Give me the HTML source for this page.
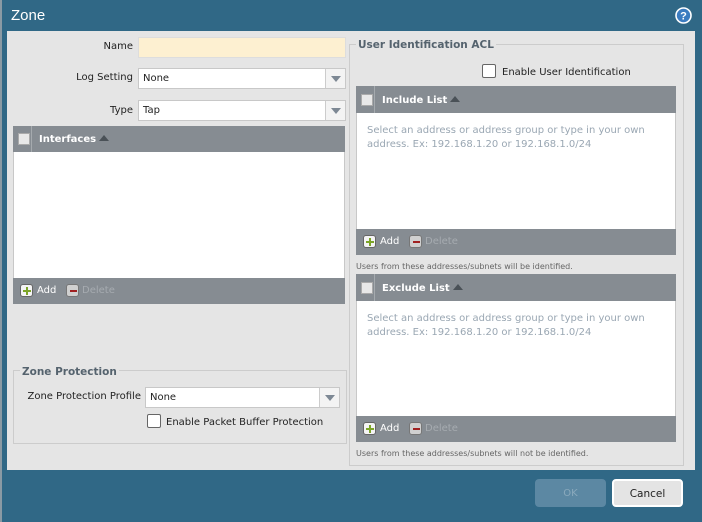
<!DOCTYPE html>
<html><head><style>
*{margin:0;padding:0;box-sizing:border-box}
body{width:702px;height:522px;background:#306886;font-family:"DejaVu Sans","Liberation Sans",sans-serif;font-size:10px;color:#222;position:relative;overflow:hidden}
.a{position:absolute;white-space:nowrap}
.title{left:11px;top:7px;color:#fff;font-size:15px;font-family:"Liberation Sans",sans-serif}
.panel{left:7px;top:31px;width:688px;height:439px;background:#e5e5e5}
.lbl{text-align:right;font-size:10px;color:#222}
.inp{background:#fff;border:1px solid #c8c8c8;height:21px;padding:4px 4px;font-size:10px}
.arr{position:absolute;right:0;top:0;width:20px;height:19px;border-left:1px solid #ccc;background:#f3f3f3}
.arr:after{content:"";position:absolute;left:5px;top:7px;border-left:5px solid transparent;border-right:5px solid transparent;border-top:6px solid #7d8894}
.hdr{background:#868c92;color:#fff;font-weight:bold;font-size:10px}
.cb{position:absolute;width:12px;height:12px;background:#e8e8e8;border:1px solid #aaa}
.sep{position:absolute;left:18px;top:0;width:1px;height:100%;background:#a5aaae}
.tri{display:inline-block;border-left:5px solid transparent;border-right:5px solid transparent;border-bottom:6px solid #4a5157;margin-left:3px;vertical-align:1px}
.ftr{background:#868c92;color:#fff;font-size:10px}
.plus,.minus{position:absolute;width:13px;height:13px;border-radius:3px;background:#f4f4f4;border:1px solid #666}
.plus:before{content:"";position:absolute;left:2px;top:4.5px;width:8px;height:2.5px;background:#7da528}
.plus:after{content:"";position:absolute;left:4.7px;top:2px;width:2.5px;height:8px;background:#7da528}
.minus{background:#d0d0d0;border-color:#777}
.minus:before{content:"";position:absolute;left:2.5px;top:4.5px;width:7px;height:2.5px;background:#a02020}
.ph{color:#9aa7b3;font-size:10px;line-height:14px;white-space:nowrap}
.note{color:#666;font-size:8px}
.chk{position:absolute;width:14px;height:14px;background:#fff;border:1px solid #666;border-radius:2px}
.fs{border:1px solid #ccc}
.leg{background:#e5e5e5;color:#55636e;font-weight:bold;font-size:10.5px;padding:0 2px}
</style></head><body>
<div class="a" style="left:0;top:0;width:2px;height:522px;background:#8a9aa4"></div>
<div class="a title">Zone</div>
<svg class="a" style="left:675px;top:7px" width="17" height="17" viewBox="0 0 17 17"><circle cx="8.5" cy="8.5" r="7.5" fill="#3c7cc0" stroke="#fff" stroke-width="1.6"/><text x="8.5" y="12.5" font-size="11" font-weight="bold" fill="#fff" text-anchor="middle" font-family="Liberation Sans">?</text></svg>
<div class="a panel"></div>

<div class="a lbl" style="left:40px;top:41px;width:93px">Name</div>
<div class="a inp" style="left:138px;top:37px;width:208px;background:#fdf0d1;border-color:#ddd"></div>
<div class="a lbl" style="left:40px;top:72px;width:93px">Log Setting</div>
<div class="a inp" style="left:138px;top:68px;width:208px">None<div class="arr"></div></div>
<div class="a lbl" style="left:40px;top:105px;width:93px">Type</div>
<div class="a inp" style="left:138px;top:100px;width:208px">Tap<div class="arr"></div></div>

<div class="a hdr" style="left:13px;top:126px;width:332px;height:26px"><div class="cb" style="left:5px;top:7px"></div><div class="sep"></div><span class="a" style="left:26px;top:8px">Interfaces<span class="tri"></span></span></div>
<div class="a" style="left:13px;top:152px;width:332px;height:126px;background:#fff;border-left:1px solid #c8c8c8;border-right:1px solid #c8c8c8"></div>
<div class="a ftr" style="left:13px;top:278px;width:332px;height:26px"><div class="plus" style="left:7px;top:6px"></div><span class="a" style="left:24px;top:7px">Add</span><div class="minus" style="left:53px;top:6px"></div><span class="a" style="left:69px;top:7px;color:#a6abb0">Delete</span></div>

<div class="a fs" style="left:13px;top:370px;width:334px;height:74px"></div>
<div class="a leg" style="left:20px;top:366px">Zone Protection</div>
<div class="a lbl" style="left:20px;top:391px;width:121px">Zone Protection Profile</div>
<div class="a inp" style="left:145px;top:387px;width:195px">None<div class="arr"></div></div>
<div class="chk" style="left:147px;top:414px"></div>
<div class="a" style="left:166px;top:417px">Enable Packet Buffer Protection</div>

<div class="a fs" style="left:349px;top:44px;width:335px;height:422px"></div>
<div class="a leg" style="left:356px;top:39px">User Identification ACL</div>
<div class="chk" style="left:482px;top:64px"></div>
<div class="a" style="left:502px;top:67px">Enable User Identification</div>

<div class="a hdr" style="left:356px;top:86px;width:320px;height:27px"><div class="cb" style="left:5px;top:8px"></div><div class="sep"></div><span class="a" style="left:26px;top:9px">Include List<span class="tri"></span></span></div>
<div class="a" style="left:356px;top:113px;width:320px;height:116px;background:#fff;border-left:1px solid #c8c8c8;border-right:1px solid #c8c8c8"><div class="ph" style="margin:11px 0 0 10px">Select an address or address group or type in your own<br>address. Ex: 192.168.1.20 or 192.168.1.0/24</div></div>
<div class="a ftr" style="left:356px;top:229px;width:320px;height:26px"><div class="plus" style="left:7px;top:6px"></div><span class="a" style="left:24px;top:7px">Add</span><div class="minus" style="left:53px;top:6px"></div><span class="a" style="left:69px;top:7px;color:#a6abb0">Delete</span></div>
<div class="a note" style="left:356px;top:262px">Users from these addresses/subnets will be identified.</div>

<div class="a hdr" style="left:356px;top:274px;width:320px;height:27px"><div class="cb" style="left:5px;top:8px"></div><div class="sep"></div><span class="a" style="left:26px;top:9px">Exclude List<span class="tri"></span></span></div>
<div class="a" style="left:356px;top:301px;width:320px;height:115px;background:#fff;border-left:1px solid #c8c8c8;border-right:1px solid #c8c8c8"><div class="ph" style="margin:11px 0 0 10px">Select an address or address group or type in your own<br>address. Ex: 192.168.1.20 or 192.168.1.0/24</div></div>
<div class="a ftr" style="left:356px;top:416px;width:320px;height:26px"><div class="plus" style="left:7px;top:6px"></div><span class="a" style="left:24px;top:7px">Add</span><div class="minus" style="left:53px;top:6px"></div><span class="a" style="left:69px;top:7px;color:#a6abb0">Delete</span></div>
<div class="a note" style="left:356px;top:449px">Users from these addresses/subnets will not be identified.</div>

<div class="a" style="left:535px;top:479px;width:71px;height:28px;background:#5c88a3;border-radius:4px;color:#8aa9bc;text-align:center;line-height:30px">OK</div>
<div class="a" style="left:612px;top:479px;width:71px;height:28px;background:#e4e4e4;border:2px solid #fff;border-radius:4px;color:#222;text-align:center;line-height:26px;font-size:10.5px">Cancel</div>
</body></html>
